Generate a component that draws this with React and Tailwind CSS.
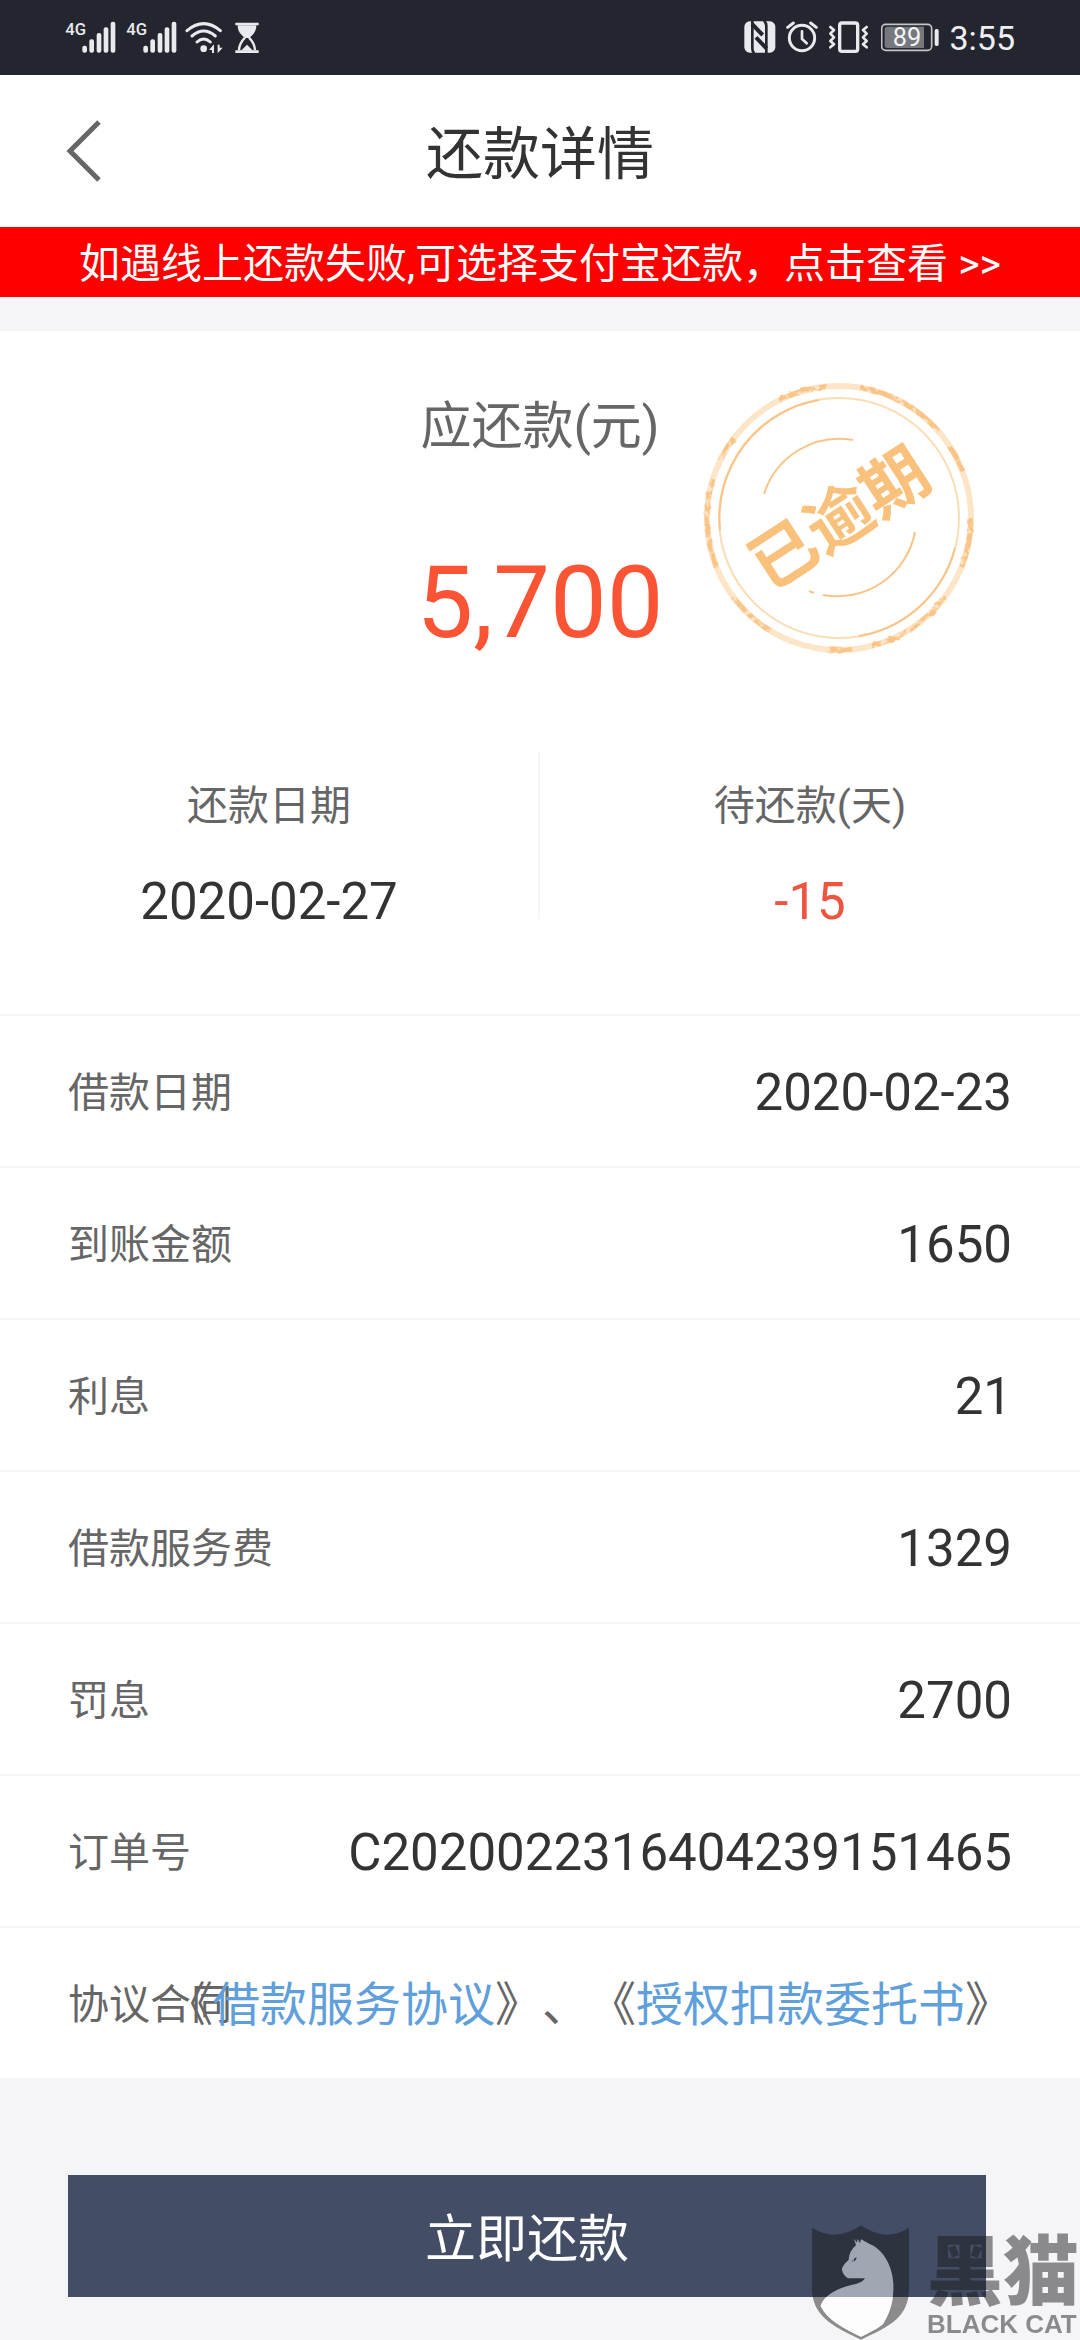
const rows = [
  { label: "借款日期", value: "2020-02-23" },
  { label: "到账金额", value: "1650" },
  { label: "利息", value: "21" },
  { label: "借款服务费", value: "1329" },
  { label: "罚息", value: "2700" },
  { label: "订单号", value: "C2020022316404239151465" },
];

function Signal() {
  return (
    <svg className="h-[75px] w-[52px]" viewBox="75 0 156 225" fill="#e9eaee">
      <text x="76" y="106" fontSize="50" fontWeight="500" fontFamily="Roboto, sans-serif">4G</text>
      <rect x="127" y="137" width="14" height="21" rx="6" />
      <rect x="148" y="118" width="14" height="40" rx="6" />
      <rect x="170" y="99" width="14" height="59" rx="6" />
      <rect x="191" y="82" width="14" height="76" rx="6" />
      <rect x="212" y="65" width="14" height="93" rx="6" />
    </svg>
  );
}

function Wifi() {
  return (
    <svg className="h-[75px] w-[38px]" viewBox="435 0 114 225" fill="none" stroke="#e9eaee" strokeWidth="9" strokeLinecap="round">
      <path d="M441 92Q491 50 541 92" />
      <path d="M456 108Q491 78 526 108" />
      <path d="M471 126Q491 108 511 126" />
      <circle cx="491" cy="146" r="10" fill="#e9eaee" stroke="none" />
      <path d="M507 150l15-17v26h-6v-9zM548 143l-15 17v-26h6v9z" fill="#e9eaee" stroke="none" />
    </svg>
  );
}

function Hourglass() {
  return (
    <svg className="h-[75px] w-[24px]" viewBox="585 0 72 225" fill="#e9eaee">
      <path d="M586 68h70v8h-70zM586 151h70v8h-70z" />
      <path d="M593 76h56c0 20-10 27-21 38h-14c-11-11-21-18-21-38z" />
      <path d="M615 113c-10 10-18 22-18 38M627 113c10 10 18 22 18 38" fill="none" stroke="#e9eaee" strokeWidth="7" />
      <path d="M603 152l18-18 18 18z" />
    </svg>
  );
}

function Nfc() {
  return (
    <svg className="h-[75px] w-[32px]" viewBox="72 0 96 225">
      <rect x="73" y="64" width="93" height="94" rx="16" fill="#e9eaee" />
      <g fill="none" stroke="#24262f" strokeWidth="8">
        <path d="M97 63V146Q97 154 103 160" />
        <path d="M139 159V78Q139 68 132 62" />
        <path d="M96 72L128 105" strokeWidth="12" />
        <path d="M108 112L140 146" strokeWidth="12" />
      </g>
    </svg>
  );
}

function Alarm() {
  return (
    <svg className="h-[75px] w-[32px]" viewBox="198 0 96 225" fill="none" stroke="#e9eaee" strokeLinecap="round">
      <circle cx="246" cy="114" r="38" strokeWidth="9" />
      <path d="M246 94v23l14 13" strokeWidth="8" />
      <path d="M203 82l17-13M289 82l-17-13" strokeWidth="9" />
    </svg>
  );
}

function Vibrate() {
  return (
    <svg className="h-[75px] w-[41px]" viewBox="324 0 123 225" fill="none" stroke="#e9eaee" strokeLinejoin="round" strokeLinecap="round">
      <rect x="359" y="69" width="54" height="85" rx="7" strokeWidth="10" />
      <path d="M331 81l11 9-11 11 11 11-11 11 11 10-11 9" strokeWidth="8" />
      <path d="M440 81l-11 9 11 11-11 11 11 11-11 10 11 9" strokeWidth="8" />
    </svg>
  );
}

function Battery() {
  return (
    <svg className="h-[75px] w-[58px]" viewBox="489 0 174 225">
      <rect x="491" y="73" width="150" height="78" rx="12" fill="none" stroke="#c4c5ca" strokeWidth="5" />
      <path d="M508 80h110v64H508q-8 0-8-8V88q0-8 8-8z" fill="#77787e" />
      <text x="567" y="137" textAnchor="middle" fontSize="76" fontFamily="Roboto, sans-serif" fill="#f3f4f6">89</text>
      <rect x="650" y="87" width="12" height="51" rx="5" fill="#e9eaee" />
    </svg>
  );
}

function Stamp() {
  return (
    <svg className="h-[274px] w-[274px]" viewBox="-137 -137 274 274" fill="none" stroke="#f9c486" aria-label="已逾期">
      <defs>
        <filter id="rough" x="-5%" y="-5%" width="110%" height="110%">
          <feTurbulence type="fractalNoise" baseFrequency="0.15" numOctaves="2" seed="4" result="n" />
          <feDisplacementMap in="SourceGraphic" in2="n" scale="4" result="d" />
          <feColorMatrix in="n" type="matrix" values="0 0 0 0 0  0 0 0 0 0  0 0 0 0 0  5 0 0 0 -1.5" result="m" />
          <feComposite in="d" in2="m" operator="in" />
        </filter>
      </defs>
      <circle r="132" strokeWidth="6" stroke="#fde5c8" />
      <g filter="url(#rough)">
        <circle r="132" strokeWidth="5" strokeDasharray="50 34 90 20 26 60" />
      </g>
      <circle r="120" strokeWidth="2" stroke="#fbdcb4" />
      <path d="M-119 12A120 120 0 0 1 -20 -118M20 118A120 120 0 0 0 116 30" strokeWidth="2" />
      <path d="M-75 -24A79 79 0 0 1 14 -78" strokeWidth="2" />
      <path d="M76 14A79 79 0 0 1 -16 77M-25 75l-5 -2" strokeWidth="2" />
      <text
        transform="rotate(-33)"
        y="24"
        textAnchor="middle"
        fontSize="66"
        fontWeight="700"
        fontFamily="'Noto Sans CJK SC', sans-serif"
        fill="#f9c17c"
        stroke="none"
      >
        已逾期
      </text>
    </svg>
  );
}

function Watermark() {
  return (
    <div className="pointer-events-none absolute right-0 bottom-0 flex items-end">
      <svg className="h-[115px] w-[97px]" viewBox="93 75 291 345">
        <path
          fillRule="evenodd"
          fill="#181818"
          fillOpacity="0.48"
          d="M93 83Q165 128 240 76Q313 128 384 83V265C384 350 330 378 240 419C150 378 93 345 93 265ZM219 116L225 136Q205 152 203 180Q182 198 183 210Q188 230 203 235H252Q243 250 214 254Q132 275 119 318C140 362 190 386 240 410C275 393 296 382 306 372C335 325 338 290 337 250C334 190 300 145 266 132L240 118L237 130L230 117L228 128Z"
        />
        <path
          fill="#ffffff"
          fillOpacity="0.5"
          d="M219 116L225 136Q205 152 203 180Q182 198 183 210Q188 230 203 235H252Q243 250 214 254Q132 275 119 318C140 362 190 386 240 410C275 393 296 382 306 372C335 325 338 290 337 250C334 190 300 145 266 132L240 118L237 130L230 117L228 128Z"
        />
        <path d="M119 318C140 362 190 386 240 410C275 393 296 382 306 372C320 350 328 330 332 291H135Q122 305 119 318Z" fill="#ffffff" fillOpacity="0.6" />
        <path d="M211 185q5-13 17-15q1 14-15 17zM218 172l-2 14" fill="#30364a" stroke="#a0a6b5" strokeWidth="3" />
      </svg>
      <div className="flex flex-col pr-px pb-[3px] pl-[18px] text-[#181818] opacity-[0.48]">
        <span className="text-[76px] leading-[76px] font-black">黑猫</span>
        <span className="font-['Liberation_Sans',sans-serif] text-[26px] leading-[26px] font-bold">BLACK CAT</span>
      </div>
    </div>
  );
}

export default function App() {
  return (
    <div className="relative min-h-screen bg-[#f5f5f8] pb-[43px] font-[Roboto,'Noto_Sans_CJK_SC',sans-serif] text-[#333333]">
      <div className="flex h-[75px] items-center justify-between bg-[#24262f] px-[65px]">
        <div className="flex items-center">
          <Signal />
          <div className="w-[9px]" />
          <Signal />
          <div className="w-[7px]" />
          <Wifi />
          <div className="w-3" />
          <Hourglass />
        </div>
        <div className="flex items-center gap-[10px]">
          <Nfc />
          <Alarm />
          <Vibrate />
          <div className="pl-[2px]">
            <Battery />
          </div>
          <span className="text-[34px] leading-10 text-[#eeeff2]">3:55</span>
        </div>
      </div>

      <header className="grid h-[152px] grid-cols-[1fr_auto_1fr] items-center bg-white px-[66px]">
        <button type="button" aria-label="返回" className="justify-self-start">
          <svg className="h-[64px] w-[36px]" viewBox="0 0 36 64" fill="none" stroke="#666666" strokeWidth="5">
            <path d="M33 3L4 32L33 61" />
          </svg>
        </button>
        <h1 className="pt-2 text-[57px] leading-[64px] font-normal">还款详情</h1>
      </header>

      <a href="#alipay" className="flex h-[70px] items-center justify-center bg-[#fe0000] pt-1 text-[41px] leading-[56px] whitespace-pre text-white [text-spacing-trim:space-all]">
        如遇线上还款失败,可选择支付宝还款，点击查看 &gt;&gt;
      </a>

      <main className="mt-[34px] bg-white">
        <section className="relative flex flex-col items-center pt-[64px]">
          <h2 className="text-[51px] leading-[64px] font-normal text-[#666666]">应还款(元)</h2>
          <p className="mt-[84px] text-[101px] leading-[120px] text-[#fb5435]">5,700</p>
          <div className="absolute top-[50px] right-[104px]">
            <Stamp />
          </div>
        </section>

        <section className="mt-[89px] grid h-[167px] grid-cols-2 text-center">
          <div className="border-r-2 border-[#f6f6f6] pt-6">
            <h3 className="text-[41px] leading-[60px] font-normal text-[#666666]">还款日期</h3>
            <p className="mt-12 text-[51px] leading-[35px]">2020-02-27</p>
          </div>
          <div className="pt-6">
            <h3 className="text-[41px] leading-[60px] font-normal text-[#666666]">待还款(天)</h3>
            <p className="mt-12 text-[51px] leading-[35px] text-[#ee5540]">-15</p>
          </div>
        </section>

        <dl className="mt-[95px]">
          {rows.map((row) => (
            <div key={row.label} className="flex h-[152px] items-center justify-between border-t-2 border-[#f5f5f5] px-[68px] pt-1">
              <dt className="text-[41px]/[60px] text-[#666666]">{row.label}</dt>
              <dd className="text-[51px]/[60px]">{row.value}</dd>
            </div>
          ))}
          <div className="flex h-[152px] items-center justify-between border-t-2 border-[#f5f5f5] px-[68px] pt-1 whitespace-nowrap text-[#666666]">
            <dt className="min-w-0 text-[41px]/[60px]">协议合同</dt>
            <dd className="shrink-0 text-[47px]/[60px] [text-spacing-trim:space-all]">
              《<a href="#loan" className="text-[#5f9fdb]">借款服务协议</a>》、《<a href="#debit" className="text-[#5f9fdb]">授权扣款委托书</a>》
            </dd>
          </div>
        </dl>
      </main>

      <button type="button" className="mt-[97px] ml-[68px] block h-[122px] w-[85%] bg-[#434d66] pt-2 text-[51px] text-white">
        立即还款
      </button>

      <Watermark />
    </div>
  );
}
